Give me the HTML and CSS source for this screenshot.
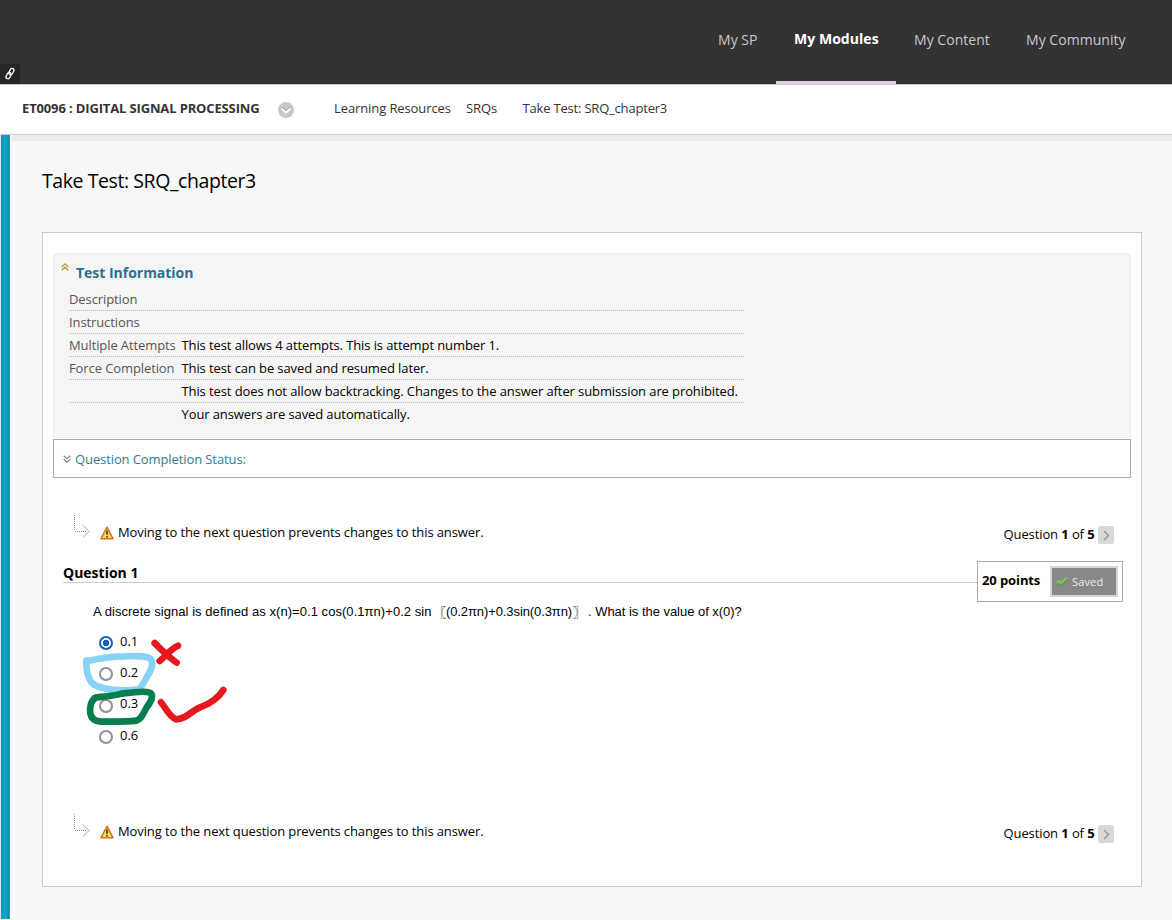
FILE: index.html
```html
<!DOCTYPE html>
<html lang="en">
<head>
<meta charset="utf-8">
<title>Take Test: SRQ_chapter3</title>
<link rel="stylesheet" href="styles.css">
</head>
<body>
<header class="topbar">
  <div class="quick-link">
    <svg width="20" height="20" viewBox="0 0 20 20" fill="none" stroke="#fff" stroke-width="1.3"><rect x="-1.9" y="-3.3" width="3.8" height="6.6" rx="1.9" transform="translate(11.4 7.6) rotate(28)"/><rect x="-1.9" y="-3.3" width="3.8" height="6.6" rx="1.9" transform="translate(8.600 11.6) rotate(28)"/></svg>
  </div>
  <nav class="tabs">
    <a class="tab tab-sp">My SP</a>
    <a class="tab tab-modules active">My Modules</a>
    <a class="tab tab-content">My Content</a>
    <a class="tab tab-community">My Community</a>
  </nav>
</header>
<div class="crumbs">
  <strong class="course">ET0096 : DIGITAL SIGNAL PROCESSING</strong>
  <svg class="course-menu" width="16" height="16" viewBox="0 0 16 16"><circle cx="8" cy="8" r="8" fill="#c8c8c8"/><path d="M3.5 5.500l4.500 4 4.500-4" fill="none" stroke="#a6a6a6" stroke-width="2"/><path d="M3.5 6.500l4.500 4 4.500-4" fill="none" stroke="#fff" stroke-width="1.8"/></svg>
  <a class="crumb crumb-resources">Learning Resources</a>
  <a class="crumb crumb-srq">SRQs</a>
  <span class="crumb crumb-here">Take Test: SRQ_chapter3</span>
</div>
<div class="page">
  <div class="rail"></div>
  <main class="main">
    <h1 class="title">Take Test: SRQ_chapter3</h1>
    <section class="panel">
      <div class="info">
        <h2 class="info-title">
          <svg class="collapse" width="8" height="8" viewBox="0 0 8 8" fill="none" stroke="#c79a3c" stroke-width="1.3"><path d="M.7 4L4 .9 7.3 4M.7 7.3L4 4.2l3.3 3.1"/></svg>
          <span>Test Information</span>
        </h2>
        <div class="info-rows">
          <div class="row"><span class="label">Description</span></div>
          <div class="row"><span class="label">Instructions</span></div>
          <div class="row"><span class="label">Multiple Attempts</span><span>This test allows 4 attempts. This is attempt number 1.</span></div>
          <div class="row"><span class="label">Force Completion</span><span>This test can be saved and resumed later.</span></div>
          <div class="row"><span class="label"></span><span>This test does not allow backtracking. Changes to the answer after submission are prohibited.</span></div>
          <div class="row"><span class="label"></span><span>Your answers are saved automatically.</span></div>
        </div>
      </div>
      <div class="status">
        <svg width="8" height="8" viewBox="0 0 8 8" fill="none" stroke="#888" stroke-width="1.2"><path d="M.7.7L4 3.8 7.3.7M.7 4L4 7.1 7.3 4"/></svg>
        <span>Question Completion Status:</span>
      </div>
      <div class="notice notice-top">
        <svg class="branch" width="18" height="24" viewBox="0 0 18 24" fill="none" stroke="#888"><path d="M1.5 0v16M2 16.5h12" stroke-dasharray="1 1"/><path d="M10 10.500l6 6-6 6" stroke="#999" stroke-width=".9"/></svg>
        <svg class="warning" width="14" height="14" viewBox="0 0 14 14"><path d="M7 1.200L13.100 12.800H.9z" fill="#ffd85e" stroke="#cf7426" stroke-width="1.5" stroke-linejoin="round"/><path d="M7 4.500v4.200M7 10v1.600" stroke="#382510" stroke-width="1.500"/></svg>
        <span class="notice-text">Moving to the next question prevents changes to this answer.</span>
        <span class="pager">Question <b>1</b> of <b>5</b></span>
        <span class="next"><svg width="16" height="18" viewBox="0 0 16 18" fill="none" stroke="#929292" stroke-width="1.300"><path d="M6 5l4.500 4.500L6 14"/></svg></span>
      </div>
      <div class="question-head">
        <h3 class="question-title">Question 1</h3>
        <div class="points">
          <b>20 points</b>
          <span class="saved"><svg width="12" height="10" viewBox="0 0 12 10"><path d="M.8 5.300l2.200-1.800 2 2.100L10.300.7l1.200 1L5.200 9z" fill="#59c633" stroke="#a1ef78" stroke-width=".7"/><path d="M1.200 6l4 3L11.500 2" fill="none" stroke="#237d1c" stroke-width=".8"/></svg>Saved</span>
        </div>
      </div>
      <div class="question-body">
        <p class="prompt"><span class="prompt-a">A discrete signal is defined as x(n)=0.1 cos(0.1πn)+0.2 sin</span><span class="bracket">〖</span><span class="prompt-b">(0.2πn)+0.3sin(0.3πn)</span><span class="bracket">〗</span><span class="prompt-c">. What is the value of x(0)?</span></p>
        <div class="options">
          <div class="option"><span class="radio checked"></span><span class="value">0.1</span></div>
          <div class="option"><span class="radio"></span><span class="value">0.2</span></div>
          <div class="option"><span class="radio"></span><span class="value">0.3</span></div>
          <div class="option"><span class="radio"></span><span class="value">0.6</span></div>
          <svg class="ink" width="180" height="130" viewBox="0 0 540 390" fill="none" stroke-width="20" stroke-linecap="round" stroke-linejoin="round">
            <path stroke="#87d2f5" d="M54 105C90 96 128 91 164 91C202 90 231 88 241 98C253 111 245 130 232 151C224 164 218 180 207 189C192 194 151 194 125 191C99 186 76 183 64 169C52 151 48 126 49 104"/>
            <path stroke="#087e4f" d="M74 216C99 211 130 211 155 203C186 199 220 194 237 199C252 204 247 222 232 241C220 259 216 280 199 284C167 288 128 287 93 287C75 286 64 279 61 262C58 244 63 224 76 215L98 212"/>
            <path stroke="#e5191d" d="M254 51C275 71 291 89 320 110M324 59C300 70 290 88 269 105"/>
            <path stroke="#e5191d" d="M273 229C288 246 296 270 318 280C347 281 361 256 390 244C420 235 447 213 460 192"/>
          </svg>
        </div>
      </div>
      <div class="notice notice-bottom">
        <svg class="branch" width="18" height="24" viewBox="0 0 18 24" fill="none" stroke="#888"><path d="M1.5 0v16M2 16.5h12" stroke-dasharray="1 1"/><path d="M10 10.500l6 6-6 6" stroke="#999" stroke-width=".9"/></svg>
        <svg class="warning" width="14" height="14" viewBox="0 0 14 14"><path d="M7 1.200L13.100 12.800H.9z" fill="#ffd85e" stroke="#cf7426" stroke-width="1.5" stroke-linejoin="round"/><path d="M7 4.500v4.200M7 10v1.600" stroke="#382510" stroke-width="1.500"/></svg>
        <span class="notice-text">Moving to the next question prevents changes to this answer.</span>
        <span class="pager">Question <b>1</b> of <b>5</b></span>
        <span class="next"><svg width="16" height="18" viewBox="0 0 16 18" fill="none" stroke="#929292" stroke-width="1.300"><path d="M6 5l4.500 4.500L6 14"/></svg></span>
      </div>
    </section>
  </main>
</div>
</body>
</html>
```
FILE: styles.css
```css
* { box-sizing: border-box; }
body { margin: 0; height: 920px; overflow: hidden; background: #f8f8f8; color: #000; font: 13px/18px "Open Sans", sans-serif; letter-spacing: -.1px; }
h1, h2, h3, p { margin: 0; }
svg { display: block; flex: none; }
span, a, b, strong { white-space: nowrap; }
.topbar { display: flex; justify-content: space-between; align-items: flex-end; height: 84px; background: #333; padding-right: 28px; letter-spacing: .04px; }
.quick-link { width: 20px; height: 20px; background: #262626; border-radius: 0 3px 0 0; }
.tabs { display: flex; height: 84px; }
.tab { padding: 30px 0 0 18px; font-size: 14px; line-height: 20px; color: #c8c8c8; }
.tab-sp { width: 76px; }
.tab-modules { width: 120px; }
.tab-content { width: 112px; }
.tab-community { width: 136px; }
.tab.active { padding-top: 29px; color: #fff; font-weight: 700; border-bottom: 3px solid #e7cfec; }
.crumbs { display: flex; height: 51px; padding: 14px 0 0 22px; background: #fff; border-top: 1px solid #ccc; border-bottom: 1px solid #ccc; color: #333; }
.course { width: 256px; letter-spacing: -.14px; }
.course-menu { margin: 3px 40px 0 0; }
.crumb-resources { width: 132px; }
.crumb-srq { width: 56.500px; }
.crumb-here { letter-spacing: -.19px; }
.page { display: flex; height: 785px; }
.rail { width: 10px; height: 784px; border-left: 1px solid #d9e8eb; border-right: 1px solid #4d8e9e; background: linear-gradient(90deg, #1292ae, #08a5c5 35%, #08a0c0 75%, #188aa2); }
.main { flex: 1; margin-left: 2px; padding: 28px 30px 0 30px; border-top: 6px solid #ececec; }
.title { height: 63px; font-size: 19.500px; line-height: 24px; font-weight: 400; letter-spacing: -.42px; }
.panel { width: 1100px; height: 655px; padding: 20px 10px 0; background: #fff; border: 1px solid #ccc; }
.info { height: 185px; padding: 10px 15px 0; background: #f5f5f5; border: 1px solid #ebebeb; border-radius: 3px; }
.info-title { display: flex; height: 24px; margin-left: -8px; font-size: 14px; line-height: 18px; color: #27718f; letter-spacing: -.02px; }
.collapse { margin: -1px 7px 0 0; }
.info-rows { width: 675px; }
.row { display: flex; height: 23px; line-height: 22px; border-bottom: 1px dotted #bbb; }
.row:last-child { border: 0; }
.label { flex: none; width: 112.500px; color: #555; }
.status { display: flex; align-items: center; gap: 4px; height: 39px; margin-top: 1px; padding-left: 9px; border: 1px solid #aaa; color: #28818f; }
.notice { display: flex; align-items: flex-start; height: 46px; padding-left: 20px; }
.notice-top { margin-top: 37px; }
.branch { margin-right: 9px; }
.warning { margin: 11px 4px 0 0; }
.notice-text { width: 885.500px; padding-top: 8px; letter-spacing: -.11px; }
.pager { width: 94px; padding-top: 10px; }
.next { width: 16px; height: 18px; margin-top: 11px; background: #d8d8d8; border-radius: 2px; }
.question-head { display: flex; height: 41px; padding: 0 8px 0 10px; }
.question-title { flex: 1; height: 22px; padding-top: 3px; font-size: 14px; line-height: 18px; border-bottom: 1px solid #ccc; letter-spacing: 0; }
.points { display: flex; align-items: center; justify-content: space-between; width: 146px; padding: 0 4px; border: 1px solid #aaa; }
.points b { margin-top: -3px; }
.saved { display: flex; align-items: center; gap: 4px; width: 68px; height: 31px; padding-left: 4px; background: #888; border: 2px solid #d6d6d6; color: #eee; font-size: 11px; letter-spacing: .15px; }
.question-body { height: 212px; padding: 1px 0 0 40px; font-family: "Liberation Sans", "Noto Sans CJK SC", sans-serif; letter-spacing: 0; }
.prompt { display: flex; height: 18px; }
.prompt-a { width: 340px; letter-spacing: .05px; }
.prompt-b { width: 127px; letter-spacing: -.1px; }
.prompt-c { margin-left: 2px; letter-spacing: -.03px; }
.bracket { width: 13px; font-family: "Noto Sans CJK SC", sans-serif; font-weight: 700; }
.options { position: relative; display: grid; grid-auto-rows: 31.400px; padding: 5px 0 0 6px; }
.option { display: flex; align-items: center; gap: 7px; height: 31px; font-family: "Open Sans", sans-serif; font-size: 13px; }
.value { margin-top: -1.600px; }
.radio { width: 14px; height: 14px; margin-top: 3px; border: 2px solid #8f8f9d; border-radius: 50%; background: #fff; }
.radio.checked { border-color: #1560bd; background: radial-gradient(circle, #1560bd 0 3px, #fff 3.600px); }
.ink { position: absolute; left: -23px; top: 4.500px; }
```
